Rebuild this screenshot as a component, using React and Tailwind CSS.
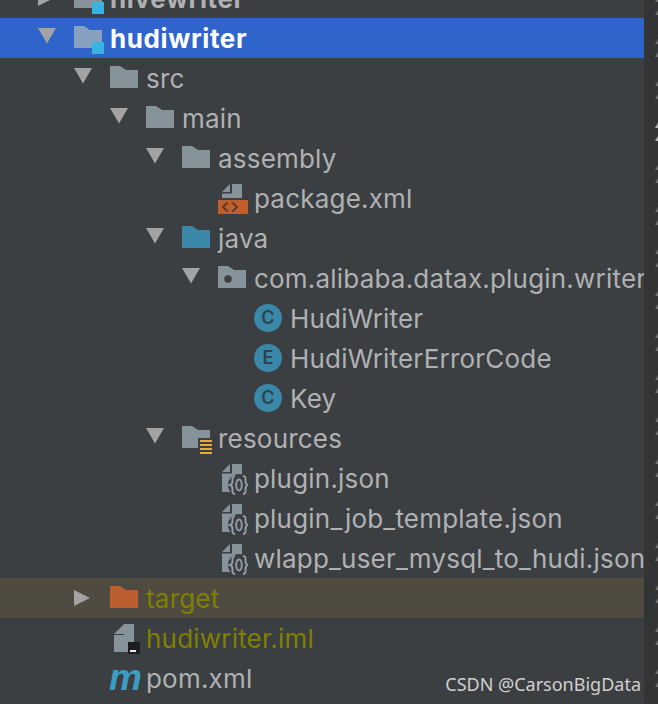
import React from 'react';

const Arrow = ({ open }) =>
  open ? (
    <svg width="18" height="16" viewBox="0 0 18 16" className="-mt-1 block shrink-0">
      <path d="M0 0h18L9 15.500z" fill="#a3a3a3" />
    </svg>
  ) : (
    <svg width="16" height="16" viewBox="0 0 16 16" className="block shrink-0">
      <path d="M0 0l16 8-16 8z" fill="#a3a3a3" />
    </svg>
  );

const Folder = ({ color = '#87939a', children }) => (
  <svg width="28" height="22" viewBox="0 0 28 22" className="mb-[2px] block">
    <path d="M0 0h10l6 4h12v18H0z" fill={color} />
    {children}
  </svg>
);

const ModuleFolder = ({ color = '#87939a' }) => (
  <svg width="30" height="28" viewBox="0 0 30 28" className="mt-1 block">
    <path d="M0 0h10l6 4h12v18H0z" fill={color} />
    <rect x="18" y="16" width="12" height="12" fill="#3bb3e0" />
  </svg>
);

const ResourceFolder = () => (
  <svg width="30" height="28" viewBox="0 0 30 28" className="mt-1 block">
    <path d="M0 0h10l6 4h12v8H16v10H0z" fill="#87939a" />
    <path d="M18 15h12M18 19h12M18 23h12M18 27h12" stroke="#e5a83b" strokeWidth="2" />
  </svg>
);

const XmlFile = () => (
  <svg width="30" height="36" viewBox="0 0 30 36" className="block">
    <path d="M4 12l8-8v8zM14 4h10v14H4v-4.500h10z" fill="#87939a" />
    <rect x="0" y="20" width="30" height="14" fill="#c05f2c" />
    <path d="M9.500 22.500L5 27l4.500 4.500M14.500 22.500L19 27l-4.500 4.500" fill="none" stroke="#57392a" strokeWidth="1.800" />
  </svg>
);

const JsonFile = () => (
  <svg width="30" height="36" viewBox="0 0 30 36" className="block">
    <path d="M4 12l8-8v8zM14 4h10v12h-10zM4 13.500h10V32H4z" fill="#87939a" />
    <circle cx="21" cy="25" r="11" fill="#3c3f41" />
    <path
      d="M17 16c-3 0-2.500 3-2.500 5 0 2-.8 3.500-2.500 4 1.700.5 2.500 2 2.500 4 0 2-.5 5 2.500 5M25 16c3 0 2.500 3 2.500 5 0 2 .8 3.500 2.500 4-1.700.5-2.500 2-2.500 4 0 2 .5 5-2.500 5"
      fill="none"
      stroke="#8f9ca3"
      strokeWidth="2"
    />
    <ellipse cx="21" cy="25" rx="2.800" ry="5.500" fill="none" stroke="#8f9ca3" strokeWidth="2" />
  </svg>
);

const ImlFile = () => (
  <svg width="30" height="36" viewBox="0 0 30 36" className="block">
    <path d="M4 14L14 4v10zM14 4h10v18h-6v10H4V15h10z" fill="#87939a" />
    <rect x="18" y="22" width="12" height="12" fill="#1d1d1f" />
    <rect x="20" y="30" width="6" height="2" fill="#e8e8e8" />
  </svg>
);

const PackageFolder = () => (
  <Folder>
    <circle cx="10" cy="13" r="3.800" fill="#3c3f41" />
  </Folder>
);

const ClassBadge = ({ letter }) => (
  <div className="flex h-7 w-7 items-center justify-center rounded-full bg-[#3b87a8] text-[18px] font-semibold leading-none text-[#2b4450]">
    {letter}
  </div>
);

const Maven = () => (
  <span className="-ml-px -mt-px font-['Liberation_Sans',sans-serif] text-[37px] font-bold italic leading-none text-[#3d9cc1]">
    m
  </span>
);

const rows = [
  { depth: 0, arrow: 'closed', icon: <ModuleFolder />, label: 'hivewriter', bold: true },
  { depth: 0, arrow: 'open', icon: <ModuleFolder color="#87a0bd" />, label: 'hudiwriter', bold: true, selected: true },
  { depth: 1, arrow: 'open', icon: <Folder />, label: 'src' },
  { depth: 2, arrow: 'open', icon: <Folder />, label: 'main' },
  { depth: 3, arrow: 'open', icon: <Folder />, label: 'assembly' },
  { depth: 4, icon: <XmlFile />, label: 'package.xml' },
  { depth: 3, arrow: 'open', icon: <Folder color="#3b87a8" />, label: 'java' },
  { depth: 4, arrow: 'open', icon: <PackageFolder />, label: 'com.alibaba.datax.plugin.writer.hudiwriter' },
  { depth: 5, icon: <ClassBadge letter="C" />, label: 'HudiWriter' },
  { depth: 5, icon: <ClassBadge letter="E" />, label: 'HudiWriterErrorCode' },
  { depth: 5, icon: <ClassBadge letter="C" />, label: 'Key' },
  { depth: 3, arrow: 'open', icon: <ResourceFolder />, label: 'resources' },
  { depth: 4, icon: <JsonFile />, label: 'plugin.json' },
  { depth: 4, icon: <JsonFile />, label: 'plugin_job_template.json' },
  { depth: 4, icon: <JsonFile />, label: 'wlapp_user_mysql_to_hudi.json' },
  { depth: 1, arrow: 'closed', icon: <Folder color="#bb5f30" />, label: 'target', ignored: true, highlight: true },
  { depth: 1, icon: <ImlFile />, label: 'hudiwriter.iml', ignored: true },
  { depth: 1, icon: <Maven />, label: 'pom.xml' },
];

const paddings = ['pl-[38px]', 'pl-[74px]', 'pl-[110px]', 'pl-[146px]', 'pl-[182px]', 'pl-[218px]'];

const Row = ({ row }) => {
  let bg = '';
  if (row.selected) bg = 'bg-[#2f65ca]';
  if (row.highlight) bg = 'bg-[#4f4b41]';

  let color = 'text-[#afb1b3]';
  if (row.selected) color = 'text-white';
  if (row.ignored) color = 'text-[#808000]';

  return (
    <div className={`flex h-10 items-center whitespace-nowrap ${paddings[row.depth]} ${bg}`}>
      <div className="flex w-9 shrink-0 items-center">{row.arrow && <Arrow open={row.arrow === 'open'} />}</div>
      <div className="flex w-9 shrink-0 items-center">{row.icon}</div>
      <span className={`pt-px text-[26px] ${row.bold ? 'font-bold tracking-[0.6px]' : 'tracking-[0.2px]'} ${color}`}>{row.label}</span>
    </div>
  );
};

// fold markers down the gutter, one pair per 42px
const markerPairs = [false, false, false, true, false, false, false, false, false, false, false, false, false, false, false, false, false];

const Marker = ({ bright }) => (
  <svg width="3" height="5" viewBox="0 0 3 5" className="block">
    <path d="M0 5l3-5v5z" fill={bright ? '#b5b5b5' : '#6e6e6e'} />
  </svg>
);

export default function App() {
  return (
    <div className="relative flex h-[704px] w-[658px] overflow-hidden bg-[#3c3f41] font-['Inter',sans-serif]">
      <div className="w-[644px] shrink-0 overflow-hidden">
        <div className="-mt-[22px]">
          {rows.map((row) => (
            <Row key={row.label} row={row} />
          ))}
        </div>
      </div>
      <div className="flex flex-1 flex-col items-end bg-[#323436]">
        <div className="-mt-[3px]">
          {markerPairs.map((bright, i) => (
            <div key={i} className="flex h-[42px] flex-col gap-2">
              <Marker bright={bright} />
              <Marker bright={bright} />
            </div>
          ))}
        </div>
      </div>
      <div className="absolute bottom-[11px] right-[17px] font-['Noto_Sans',sans-serif] text-[18px] leading-none text-[#cfcfcf]">
        CSDN @CarsonBigData
      </div>
    </div>
  );
}
